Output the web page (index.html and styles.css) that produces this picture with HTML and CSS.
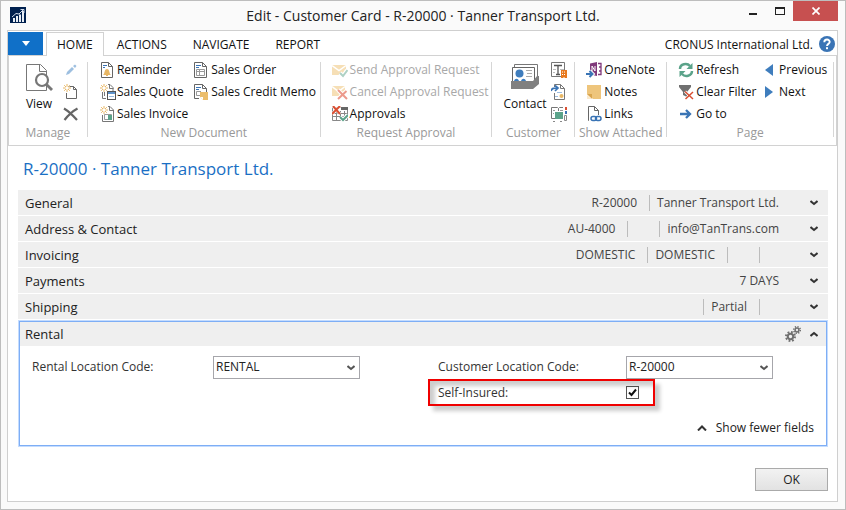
FILE: index.html
```
<!DOCTYPE html>
<html lang="en">
<head>
<meta charset="utf-8">
<title>Edit - Customer Card</title>
<link rel="stylesheet" href="styles.css">
</head>
<body>
<div class="window">
  <header class="titlebar">
    <svg class="app-icon" width="16" height="16" viewBox="0 0 16 16"><rect width="16" height="16" fill="#00204f"/><path d="M3 15v-4h2v4zM6 15V9h2v6zM9 15V7.500h2V15zM12 15V4h2v11z" fill="#e8eef6"/><path d="M2 10l4-3.500 3 .5 4-4M10.500 2.500H14V6" fill="none" stroke="#cfdaea"/></svg>
    <h1 class="title">Edit - Customer Card - R-20000 · Tanner Transport Ltd.</h1>
    <div class="window-buttons">
      <button class="win-btn" aria-label="Minimize"><svg width="10" height="12" viewBox="0 0 10 12"><path d="M1 8h8v2H1z" fill="#222"/></svg></button>
      <button class="win-btn" aria-label="Maximize"><svg width="10" height="8" viewBox="0 0 10 8"><path d="M0 0h10v8H0zM1 2v5h8V2z" fill="#222" fill-rule="evenodd"/></svg></button>
      <button class="win-btn close" aria-label="Close"><svg width="8" height="8" viewBox="0 0 8 8"><path d="M.5.500l7 7M7.500.500l-7 7" stroke="#fff" stroke-width="1.700"/></svg></button>
    </div>
  </header>

  <div class="client">
    <nav class="tabs">
      <button class="file-tab" aria-label="Application menu"><svg width="8" height="5" viewBox="0 0 8 5"><path d="M0 0h8L4 5z" fill="#fff"/></svg></button>
      <button class="tab active">HOME</button>
      <button class="tab">ACTIONS</button>
      <button class="tab">NAVIGATE</button>
      <button class="tab">REPORT</button>
      <span class="company">CRONUS International Ltd.</span>
      <button class="help" aria-label="Help"><svg width="16" height="16" viewBox="0 0 16 16"><circle cx="8" cy="8" r="8" fill="#3a74b5"/><path d="M5.300 6.300C5.300 2.600 10.800 2.800 10.700 6 10.600 7.900 8 7.900 8 10" fill="none" stroke="#fff" stroke-width="1.900"/><rect x="7" y="11.200" width="2" height="2" fill="#fff"/></svg></button>
    </nav>

    <div class="ribbon">
      <section class="group manage">
        <div class="commands">
          <button class="big"><svg width="30" height="32" viewBox="0 0 30 32"><path d="M2.500 2.500h14l6 6v20h-20z" fill="#fff" stroke="#777"/><path d="M15.500 2.500v7h7" fill="none" stroke="#777"/><circle cx="18" cy="18" r="6" fill="#fff" stroke="#777" stroke-width="2.200"/><path d="M22 22l6 6" stroke="#777" stroke-width="2.800"/></svg><span>View</span></button>
          <div class="stack">
            <button aria-label="Edit" disabled><svg width="16" height="16" viewBox="0 0 16 16"><path d="M3 13l1-3 5-5 2 2-5 5z" fill="#9dbfe0"/><path d="M10 4l2-1.500L13.500 4 12 6z" fill="#9dbfe0"/></svg></button>
            <button aria-label="New"><svg width="16" height="16" viewBox="0 0 16 16"><path d="M6.500 2.500h4l3 3v9h-10V9M10.500 2.500v3h3" fill="none" stroke="#666"/><path d="M4 0v8M0 4h8M1.200 1.200l5.600 5.600M6.800 1.200L1.200 6.800" stroke="#e8b765"/><circle cx="4" cy="4" r="1.500" fill="#fff"/></svg></button>
            <button aria-label="Delete"><svg width="16" height="16" viewBox="0 0 16 16"><path d="M1 2.500c5 3 9 7 13 11.500M14.500 2.500C9 5.500 5 9.500 1.500 14" fill="none" stroke="#666" stroke-width="2.200"/></svg></button>
          </div>
        </div>
        <h2>Manage</h2>
      </section>

      <section class="group document">
        <div class="commands">
          <div class="stack">
            <button><svg width="16" height="16" viewBox="0 0 16 16"><path d="M1.500.500h7l4 4v11h-11zM8.500.500v4h4" fill="#fff" stroke="#666"/><path d="M3 3.500h4M3 5.500h2" stroke="#3a74b5"/><path d="M3 13c2-1 1-6 4-6s2 5 4 6zM6 13h2v1H6z" fill="#e8b765"/></svg>Reminder</button>
            <button><svg width="16" height="16" viewBox="0 0 16 16"><path d="M8 .500h2l3 3V7M9.500.500v4h4M2.500 8v6.500H6M4.500 8v4" fill="none" stroke="#777"/><path d="M4 0v8M0 4h8M1.200 1.200l5.600 5.600M6.800 1.200L1.200 6.800" stroke="#e8b765"/><circle cx="4" cy="4" r="1.500" fill="#fff"/><rect x="7.500" y="7.500" width="8" height="8" fill="#fff" stroke="#555"/><path d="M8 9h7" stroke="#5f93ca" stroke-width="2"/><path d="M9 12.500h5" stroke="#9bbce0"/></svg>Sales Quote</button>
            <button><svg width="16" height="16" viewBox="0 0 16 16"><path d="M8 .500h2l3.500 3.500v11.500h-11V9M9.500.500v4h4" fill="none" stroke="#777"/><path d="M4 0v8M0 4h8M1.200 1.200l5.600 5.600M6.800 1.200L1.200 6.800" stroke="#e8b765"/><circle cx="4" cy="4" r="1.500" fill="#fff"/><path d="M4.500 8.500h7v5h-7z" fill="#fff" stroke="#999"/><path d="M8 9h4v5H8z" fill="#5ba38a"/></svg>Sales Invoice</button>
          </div>
          <div class="stack">
            <button><svg width="16" height="16" viewBox="0 0 16 16"><path d="M.5.500h8l4 4v11H.5zM8.500.500v4h4" fill="#fff" stroke="#666"/><path d="M2 3.500h5M2 5.500h3" stroke="#3a74b5"/><path d="M2.500 7.500h8v6h-8zM2.500 9.500h8M5.500 7.500v6" fill="none" stroke="#999"/></svg>Sales Order</button>
            <button><svg width="16" height="16" viewBox="0 0 16 16"><path d="M5 14.500H.5V.500h8l4 4V8M8.500.500v4h4" fill="#fff" stroke="#666"/><path d="M2 3.500h5M2 5.500h3" stroke="#3a74b5"/><path d="M7 7.500H2.500v4H6" fill="none" stroke="#999"/><path d="M6 8h8v8H9l-3-3z" fill="#ebbd6b"/><path d="M6 13h3v3" fill="#fff"/></svg>Sales Credit Memo</button>
          </div>
        </div>
        <h2>New Document</h2>
      </section>

      <section class="group approval">
        <div class="commands">
          <div class="stack">
            <button disabled><svg width="16" height="16" viewBox="0 0 16 16"><path d="M0 3h14v10H0z" fill="#f6dfb6"/><path d="M0 3.500l7 5 7-5" fill="none" stroke="#fff" stroke-width="1.500"/><path d="M8 11l3 3 4-6" fill="none" stroke="#fff" stroke-width="4"/><path d="M8 11l3 3 4.500-6" fill="none" stroke="#aed1c4" stroke-width="2"/></svg>Send Approval Request</button>
            <button disabled><svg width="16" height="16" viewBox="0 0 16 16"><path d="M0 2h13v10H0z" fill="#f6dfb6"/><path d="M0 2.500l6.500 5 6.500-5" fill="none" stroke="#fff" stroke-width="1.500"/><path d="M6 6l9 9M14.500 7L6 15" stroke="#fff" stroke-width="4"/><path d="M6 6l9 9M14.500 7L6 15" stroke="#ec9a8c" stroke-width="2"/></svg>Cancel Approval Request</button>
            <button><svg width="16" height="16" viewBox="0 0 16 16"><path d="M.5 1.500h15v13H.5zM.5 7.500h15M.5 10.500h15M4.500 5v9.500M8.500 5v9.500M12.500 5v9.500" fill="#fff" stroke="#888"/><path d="M9 1h7v3H9z" fill="#666"/><path d="M1 0l7 8M8 0L0 8" stroke="#fff" stroke-width="3"/><path d="M1 0l7 8M8 0L0 8" stroke="#d94f32" stroke-width="2"/><path d="M8 11l3 3 5-5" fill="none" stroke="#fff" stroke-width="4"/><path d="M8 11l3 3 5-5" fill="none" stroke="#5ba38a" stroke-width="2"/></svg>Approvals</button>
          </div>
        </div>
        <h2>Request Approval</h2>
      </section>

      <section class="group customer">
        <div class="commands">
          <button class="big"><svg width="30" height="32" viewBox="0 0 30 32"><path d="M4.500 5V2.500H27.500V14" fill="none" stroke="#777"/><path d="M2.500 19V5.500h22V19" fill="#fff" stroke="#666"/><circle cx="9.500" cy="11.500" r="4" fill="#3f7dbd"/><path d="M4 19c1-3 4-3 5 0M11 19c1-3 4-3 5 0" fill="#3f7dbd"/><path d="M16 8.500h6M17 11.500h5M16 14.500h6" stroke="#aaa"/><path d="M1 19h22l4-5h2v8l-6 5H1z" fill="#808080"/></svg><span>Contact</span></button>
          <div class="stack">
            <button aria-label="Apply Template"><svg width="16" height="16" viewBox="0 0 16 16"><path d="M.5.500h13v14H.5z" fill="#fff" stroke="#777"/><path d="M3 3.500h8M7 3v9M5 12.500h4" stroke="#555" stroke-width="1.300"/><path d="M2 7.500h3M2 10.500h2M9 7.500h4" stroke="#bbb"/><path d="M10 8h6v8h-6z" fill="#e8791e"/><path d="M11 10h4M11 12.500h4M13 16v-2" stroke="#fff" stroke-dasharray="1 1"/></svg></button>
            <button aria-label="Create Document"><svg width="16" height="16" viewBox="0 0 16 16"><path d="M3.500 3V.500h6l4 4v11h-10V9M9.500.500v4h4" fill="#fff" stroke="#777"/><path d="M0 7c1-3 3-3 6-3M4 1.500L7 4 4 7" fill="none" stroke="#3a74b5" stroke-width="1.700"/><path d="M6 8.500h5M4 12.500h3" stroke="#9bbce0"/><circle cx="10.500" cy="12" r="2" fill="#e8b765"/></svg></button>
            <button aria-label="Customer Report"><svg width="16" height="16" viewBox="0 0 16 16"><path d="M4 12.500H.5v-11h6l1 1 1-1H12M7.500 2.500V5" fill="#fff" stroke="#777"/><path d="M2 4.500h2M2 7.500h1M9 4.500h3" stroke="#999"/><path d="M4 6h8v7H4z" fill="#5ba38a"/><path d="M14 1h2v3h-2z" fill="#d94f32"/><path d="M14 5h2v3h-2z" fill="#3a74b5"/><path d="M13.500 9.500h2v5h-2zM2 15.500h2M9 15.500h2" fill="none" stroke="#888"/></svg></button>
          </div>
        </div>
        <h2>Customer</h2>
      </section>

      <section class="group attached">
        <div class="commands">
          <div class="stack">
            <button><svg width="16" height="16" viewBox="0 0 16 16"><path d="M4 1.500L11 0v14l-7-1.500z" fill="#80397b"/><path d="M6 9V4l3 5V4" fill="none" stroke="#fff"/><path d="M12 1.500h3v11h-3M15 5h-2M15 9h-2" fill="none" stroke="#80397b" stroke-width="1.300"/><path d="M0 12h5M3.500 9l3 3-3 3" fill="none" stroke="#fff" stroke-width="4"/><path d="M0 12h6M3.500 9l3 3-3 3" fill="none" stroke="#3a74b5" stroke-width="2"/></svg>OneNote</button>
            <button><svg width="16" height="16" viewBox="0 0 16 16"><path d="M1 1h14v14H7l-6-5z" fill="#eec57c"/><path d="M1 10h5v5z" fill="#d9a54f"/><path d="M1 11v4h5z" fill="#fbe9cb"/></svg>Notes</button>
            <button><svg width="16" height="16" viewBox="0 0 16 16"><path d="M3 14.500h-.5V.500h6l4 4V9M8.500.500v4h4" fill="#fff" stroke="#666"/><rect x="5" y="10.500" width="5.500" height="4" rx="2" fill="#fff" stroke="#3a74b5" stroke-width="1.500"/><rect x="9.500" y="10.500" width="5.500" height="4" rx="2" fill="none" stroke="#3a74b5" stroke-width="1.500"/></svg>Links</button>
          </div>
        </div>
        <h2>Show Attached</h2>
      </section>

      <section class="group page">
        <div class="commands">
          <div class="stack">
            <button><svg width="16" height="16" viewBox="0 0 16 16"><path d="M2 7c0-5 7-6.500 10-3M14 9c0 5-7 6.500-10 3" fill="none" stroke="#5ba38a" stroke-width="2.500"/><path d="M14.500 1v6H8.500zM1.500 15V9h6z" fill="#5ba38a"/></svg>Refresh</button>
            <button><svg width="16" height="16" viewBox="0 0 16 16"><path d="M1 1h12v2L9 8v5l-4-2V8L1 3z" fill="#707070"/><path d="M7 7.500l8 7.500M15 8l-7 7" stroke="#fff" stroke-width="3"/><path d="M7 7.500l8 7.500M15 8l-7.500 7" stroke="#d94f32" stroke-width="1.500"/></svg>Clear Filter</button>
            <button><svg width="16" height="16" viewBox="0 0 16 16"><path d="M2 8h10M8 4l4 4-4 4" fill="none" stroke="#3a74b5" stroke-width="2.300"/></svg>Go to</button>
          </div>
          <div class="stack arrows">
            <button><svg width="8" height="12" viewBox="0 0 8 12"><path d="M8 0v12L0 6z" fill="#3f7dbd"/></svg>Previous</button>
            <button><svg width="8" height="12" viewBox="0 0 8 12"><path d="M0 0v12l8-6z" fill="#3f7dbd"/></svg>Next</button>
          </div>
        </div>
        <h2>Page</h2>
      </section>
    </div>

    <main class="card">
      <h2 class="card-title">R-20000 · Tanner Transport Ltd.</h2>
      <div class="tab-list">
        <button class="fasttab"><span class="name">General</span><span class="facts"><span>R-20000</span><span>Tanner Transport Ltd.</span></span><svg class="chev" width="8" height="6" viewBox="0 0 8 6"><path d="M.5 1L4 4l3.500-3" fill="none" stroke="#333" stroke-width="2"/></svg></button>
        <button class="fasttab"><span class="name">Address &amp; Contact</span><span class="facts"><span>AU-4000</span><span></span><span>info@TanTrans.com</span></span><svg class="chev" width="8" height="6" viewBox="0 0 8 6"><path d="M.5 1L4 4l3.500-3" fill="none" stroke="#333" stroke-width="2"/></svg></button>
        <button class="fasttab"><span class="name">Invoicing</span><span class="facts"><span>DOMESTIC</span><span>DOMESTIC</span><span></span><span></span></span><svg class="chev" width="8" height="6" viewBox="0 0 8 6"><path d="M.5 1L4 4l3.500-3" fill="none" stroke="#333" stroke-width="2"/></svg></button>
        <button class="fasttab"><span class="name">Payments</span><span class="facts"><span>7 DAYS</span></span><svg class="chev" width="8" height="6" viewBox="0 0 8 6"><path d="M.5 1L4 4l3.500-3" fill="none" stroke="#333" stroke-width="2"/></svg></button>
        <button class="fasttab"><span class="name">Shipping</span><span class="facts"><span></span><span>Partial</span><span></span></span><svg class="chev" width="8" height="6" viewBox="0 0 8 6"><path d="M.5 1L4 4l3.500-3" fill="none" stroke="#333" stroke-width="2"/></svg></button>
      </div>

      <section class="rental">
        <button class="fasttab"><span class="name">Rental</span><svg class="gears" width="16" height="16" viewBox="0 0 16 16" fill="none" stroke="#707070"><circle cx="5.500" cy="10.500" r="2.700" stroke-width="2"/><circle cx="5.500" cy="10.500" r="4.500" stroke-width="2" stroke-dasharray="1.800 1.734"/><circle cx="12" cy="4" r="1.900" stroke-width="1.500"/><circle cx="12" cy="4" r="3.300" stroke-width="1.500" stroke-dasharray="1.300 1.292"/></svg><svg class="chev" width="8" height="6" viewBox="0 0 8 6"><path d="M.5 5L4 2l3.500 3" fill="none" stroke="#333" stroke-width="2"/></svg></button>
        <div class="fields">
          <div class="column">
            <div class="field">
              <label for="rental-code">Rental Location Code:</label>
              <span class="combo"><select id="rental-code"><option>RENTAL</option></select><svg width="8" height="6" viewBox="0 0 8 6"><path d="M.5 1L4 4l3.500-3" fill="none" stroke="#555" stroke-width="2"/></svg></span>
            </div>
          </div>
          <div class="column">
            <div class="field">
              <label for="customer-code">Customer Location Code:</label>
              <span class="combo"><select id="customer-code"><option>R-20000</option></select><svg width="8" height="6" viewBox="0 0 8 6"><path d="M.5 1L4 4l3.500-3" fill="none" stroke="#555" stroke-width="2"/></svg></span>
            </div>
            <div class="field highlighted">
              <label for="self-insured">Self-Insured:</label>
              <span class="check"><input type="checkbox" id="self-insured" checked><svg width="9" height="9" viewBox="0 0 9 9"><path d="M1 4.500L3.500 7 8 1.500" fill="none" stroke="#111" stroke-width="2"/></svg></span>
            </div>
          </div>
        </div>
        <button class="fewer"><svg width="10" height="6" viewBox="0 0 10 6"><path d="M1 5.500l4-4 4 4" fill="none" stroke="#333" stroke-width="2"/></svg>Show fewer fields</button>
      </section>

      <footer><button class="ok">OK</button></footer>
    </main>
  </div>
</div>
</body>
</html>
```
FILE: styles.css
```
* { box-sizing: border-box; }
body {
  margin: 0;
  font-family: "Open Sans", "Noto Sans", sans-serif;
  font-size: 12px;
  line-height: 16px;
  color: #222;
}
button {
  margin: 0;
  padding: 0;
  border: 0;
  background: none;
  font: inherit;
  color: inherit;
  white-space: nowrap;
}
h1, h2 { margin: 0; font-weight: 400; }
svg { display: block; flex: none; }

.window {
  display: flex;
  flex-direction: column;
  min-height: 100vh;
  padding: 0 7px 7px;
  border: 1px solid #bdbdbd;
  background: #fafafa;
}

.titlebar {
  display: grid;
  grid-template-columns: 1fr auto 1fr;
  height: 29px;
}
.app-icon { margin: 6px 0 0 2px; }
.title { padding-top: 4px; font-size: 14px; line-height: 22px; white-space: nowrap; }
.window-buttons { display: flex; justify-content: flex-end; }
.win-btn {
  display: flex;
  align-items: center;
  justify-content: center;
  width: 27px;
  height: 20px;
}
.win-btn.close { width: 45px; background: #c75050; }

.client {
  display: flex;
  flex-direction: column;
  flex: 1;
  margin-left: -1px;
  border: 1px solid #cfcfcf;
  background: #fff;
}

.tabs {
  display: flex;
  height: 25px;
  padding-top: 1px;
  border-bottom: 1px solid #d2d2d2;
  color: #111;
}
.file-tab {
  display: flex;
  align-items: center;
  justify-content: center;
  width: 35px;
  height: 23px;
  margin-right: 3px;
  background: #1070c8;
}
.tab { padding: 2px 13px 0; }
.tab.active {
  height: 24px;
  padding: 1px 10px 0;
  border: 1px solid #d2d2d2;
  border-bottom: 0;
  background: #fff;
}
.company { margin-left: auto; padding-top: 5px; white-space: nowrap; }
.help { align-self: center; margin: 0 2px 0 6px; }

.ribbon {
  display: grid;
  grid-template-columns: 79fr 233fr 172fr 83fr 92fr 167fr;
  padding: 6px 2px 8px 0;
  border: solid #d2d2d2;
  border-width: 0 1px 1px;
  color: #111;
}
.group {
  display: flex;
  flex-direction: column;
  min-width: 0;
  height: 75px;
  border-right: 1px solid #d6d6d6;
}
.group h2 {
  margin-top: auto;
  font-size: 12px;
  line-height: 8px;
  text-align: center;
  white-space: nowrap;
  color: #999;
}
.commands { display: flex; }
.stack button {
  display: flex;
  align-items: center;
  height: 16px;
  margin-bottom: 6px;
}
.stack button:last-child { margin-bottom: 0; }
.stack button:disabled { color: #a8a8a8; }
.big { display: flex; flex-direction: column; align-items: center; }
.big span { padding-top: 2px; }

.manage .commands { gap: 9px; padding-left: 15px; }
.document .commands { display: grid; grid-template-columns: 94fr 125fr; padding-left: 12px; }
.document .stack button { gap: 1px; }
.approval .commands { padding-left: 11px; }
.approval .stack button { gap: 2px; }
.customer .commands { gap: 4px; padding-left: 11px; }
.attached .commands { padding-left: 11px; }
.attached .stack button { gap: 2px; }
.page .commands { display: grid; grid-template-columns: 87fr 68fr; padding-left: 11px; }
.page .stack button { gap: 2px; }
.page .arrows button { gap: 6px; }

.card {
  display: flex;
  flex-direction: column;
  flex: 1;
  padding: 10px 9px 10px 10px;
}
.card-title {
  padding-left: 5px;
  font-size: 17px;
  line-height: 26px;
  color: #1a6fc4;
}
.tab-list {
  display: grid;
  gap: 1px;
  margin-top: 8px;
}
.fasttab {
  display: flex;
  align-items: center;
  width: 100%;
  height: 25px;
  padding: 0 10px 0 7px;
  background: #efefef;
}
.name { flex: 1; font-size: 13px; line-height: 20px; text-align: left; }
.facts { display: flex; height: 16px; margin-right: 31px; color: #444; }
.facts span { min-width: 32px; padding: 0 12px 0 7px; }
.facts span + span { border-left: 1px solid #bcbcbc; }
.facts span:last-child { min-width: 20px; padding-right: 0; }

.rental {
  margin-top: 1px;
  padding: 0 1px 10px;
  border: 1px solid #c4dcff;
  box-shadow: inset 0 0 0 1px #7eaef5;
}
.rental .fasttab {
  padding: 0 8px 0 5px;
  box-shadow: inset 0 1px 0 #7eaef5;
}
.gears { margin-right: 9px; }
.fields {
  display: grid;
  grid-template-columns: 1fr 1fr;
  gap: 18px;
  padding: 9px 0 0 12px;
  color: #333;
}
.field {
  display: grid;
  grid-template-columns: 188px minmax(0, 147px);
  align-items: center;
  height: 24px;
}
.column:first-child .field { grid-template-columns: 181px minmax(0, 147px); }
.combo { position: relative; }
.combo select {
  display: block;
  width: 100%;
  height: 23px;
  padding: 0 2px;
  border: 1px solid #a6a6ab;
  border-radius: 0;
  background: #fff;
  font: inherit;
  color: #222;
  appearance: none;
}
.combo svg { position: absolute; right: 5px; top: 9px; pointer-events: none; }
.field.highlighted { position: relative; height: 27px; }
.field.highlighted::after {
  content: "";
  position: absolute;
  top: 0;
  bottom: 0;
  left: -10px;
  width: 223px;
  border: 2px solid #f00000;
  box-shadow: 5px 5px 4px #0003, inset 5px 5px 4px #0003;
  pointer-events: none;
}
.check { position: relative; height: 13px; }
.check input {
  display: block;
  width: 13px;
  height: 13px;
  margin: 0;
  border: 1px solid #555;
  background: #fff;
  appearance: none;
}
.check svg { position: absolute; left: 2px; top: 2px; pointer-events: none; }
.fewer {
  display: flex;
  align-items: center;
  gap: 9px;
  margin: 14px 12px 0 auto;
  color: #222;
}
footer { display: flex; justify-content: flex-end; margin-top: auto; }
.ok {
  width: 73px;
  height: 23px;
  border: 1px solid #aaa;
  background: linear-gradient(#f2f2f2, #e2e2e2);
}
```
